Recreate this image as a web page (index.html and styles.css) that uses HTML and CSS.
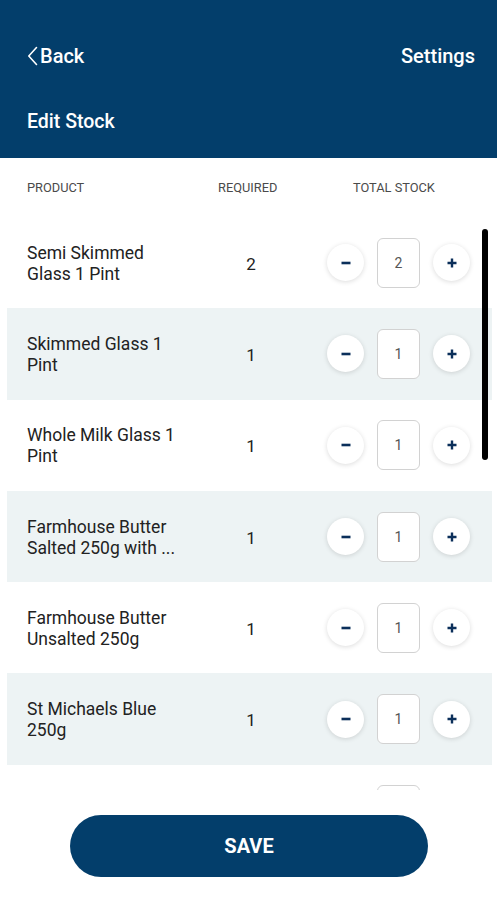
FILE: index.html
```html
<!DOCTYPE html>
<html lang="en">
<head>
    <meta charset="UTF-8">
    <meta name="viewport" content="width=device-width, initial-scale=1.0">
    <title>Edit Stock</title>
    <link rel="stylesheet" href="styles.css">
</head>
<body>
    <div class="app">
        <header class="topbar">
            <div class="nav">
                <a class="back" href="#">
                    <svg width="11" height="20" viewBox="0 0 11 20"><path d="M9.5 1.5 1.8 10l7.7 8.5" fill="none" stroke="#fff" stroke-width="1.6" stroke-linecap="round" stroke-linejoin="round"/></svg>
                    Back
                </a>
                <a class="settings" href="#">Settings</a>
            </div>
            <h1>Edit Stock</h1>
        </header>

        <div class="col-heads">
            <span class="h-product">Product</span>
            <span class="h-required">Required</span>
            <span class="h-total">Total Stock</span>
        </div>

        <div class="list">
            <div class="row">
                <div class="name">Semi Skimmed Glass 1 Pint</div>
                <div class="req">2</div>
                <div class="stepper">
                    <button class="round" type="button"><svg width="12" height="12" viewBox="0 0 12 12"><path d="M1.5 6h9" stroke="#0b2f5a" stroke-width="2.6"/></svg></button>
                    <div class="qty">2</div>
                    <button class="round" type="button"><svg width="12" height="12" viewBox="0 0 12 12"><path d="M1.5 6h9M6 1.5v9" stroke="#0b2f5a" stroke-width="2.4"/></svg></button>
                </div>
            </div>
            <div class="row alt">
                <div class="name">Skimmed Glass 1 Pint</div>
                <div class="req">1</div>
                <div class="stepper">
                    <button class="round" type="button"><svg width="12" height="12" viewBox="0 0 12 12"><path d="M1.5 6h9" stroke="#0b2f5a" stroke-width="2.6"/></svg></button>
                    <div class="qty">1</div>
                    <button class="round" type="button"><svg width="12" height="12" viewBox="0 0 12 12"><path d="M1.5 6h9M6 1.5v9" stroke="#0b2f5a" stroke-width="2.4"/></svg></button>
                </div>
            </div>
            <div class="row">
                <div class="name">Whole Milk Glass 1 Pint</div>
                <div class="req">1</div>
                <div class="stepper">
                    <button class="round" type="button"><svg width="12" height="12" viewBox="0 0 12 12"><path d="M1.5 6h9" stroke="#0b2f5a" stroke-width="2.6"/></svg></button>
                    <div class="qty">1</div>
                    <button class="round" type="button"><svg width="12" height="12" viewBox="0 0 12 12"><path d="M1.5 6h9M6 1.5v9" stroke="#0b2f5a" stroke-width="2.4"/></svg></button>
                </div>
            </div>
            <div class="row alt">
                <div class="name">Farmhouse Butter Salted 250g with ...</div>
                <div class="req">1</div>
                <div class="stepper">
                    <button class="round" type="button"><svg width="12" height="12" viewBox="0 0 12 12"><path d="M1.5 6h9" stroke="#0b2f5a" stroke-width="2.6"/></svg></button>
                    <div class="qty">1</div>
                    <button class="round" type="button"><svg width="12" height="12" viewBox="0 0 12 12"><path d="M1.5 6h9M6 1.5v9" stroke="#0b2f5a" stroke-width="2.4"/></svg></button>
                </div>
            </div>
            <div class="row">
                <div class="name">Farmhouse Butter Unsalted 250g</div>
                <div class="req">1</div>
                <div class="stepper">
                    <button class="round" type="button"><svg width="12" height="12" viewBox="0 0 12 12"><path d="M1.5 6h9" stroke="#0b2f5a" stroke-width="2.6"/></svg></button>
                    <div class="qty">1</div>
                    <button class="round" type="button"><svg width="12" height="12" viewBox="0 0 12 12"><path d="M1.5 6h9M6 1.5v9" stroke="#0b2f5a" stroke-width="2.4"/></svg></button>
                </div>
            </div>
            <div class="row alt">
                <div class="name">St Michaels Blue 250g</div>
                <div class="req">1</div>
                <div class="stepper">
                    <button class="round" type="button"><svg width="12" height="12" viewBox="0 0 12 12"><path d="M1.5 6h9" stroke="#0b2f5a" stroke-width="2.6"/></svg></button>
                    <div class="qty">1</div>
                    <button class="round" type="button"><svg width="12" height="12" viewBox="0 0 12 12"><path d="M1.5 6h9M6 1.5v9" stroke="#0b2f5a" stroke-width="2.4"/></svg></button>
                </div>
            </div>
            <div class="row">
                <div class="name"></div>
                <div class="req"></div>
                <div class="stepper">
                    <span class="round ghost"></span>
                    <div class="qty"></div>
                    <span class="round ghost"></span>
                </div>
            </div>
            <div class="scrollbar"></div>
        </div>

        <div class="footer">
            <button class="save" type="button">SAVE</button>
        </div>
    </div>
</body>
</html>
```

FILE: styles.css
```css
body {
    margin: 0;
    padding: 0;
    background-color: #fff;
    font-family: Roboto, "Liberation Sans", Arial, sans-serif;
    color: #222;
}
.app {
    width: 497px;
    height: 900px;
    overflow: hidden;
}
.topbar {
    background-color: #033e6b;
    color: #fff;
    height: 158px;
    padding: 0 22px 0 27px;
    box-sizing: border-box;
}
.nav {
    display: flex;
    justify-content: space-between;
    align-items: center;
    padding-top: 42px;
    height: 28px;
}
.nav a {
    color: #fff;
    text-decoration: none;
    font-size: 20px;
    font-weight: 500;
}
.back {
    display: flex;
    align-items: center;
    gap: 2px;
}
.topbar h1 {
    margin: 40px 0 0;
    font-size: 19.5px;
    font-weight: 500;
    line-height: 24px;
}
.col-heads {
    display: flex;
    align-items: center;
    height: 59px;
    padding-left: 27px;
    font-size: 12.8px;
    text-transform: uppercase;
    color: #4a4a4a;
}
.h-product {
    width: 191px;
}
.h-required {
    width: 135px;
}
.list {
    position: relative;
    height: 573px;
    overflow: hidden;
    padding: 0 5px 0 7px;
}
.row {
    display: flex;
    align-items: center;
    height: 91.3px;
    padding: 2px 0 0 20px;
    box-sizing: border-box;
}
.row.alt {
    background-color: #edf3f4;
}
.name {
    width: 152px;
    margin-right: 33px;
    font-size: 17.5px;
    line-height: 21px;
    color: #222;
}
.req {
    width: 78px;
    text-align: center;
    font-size: 17px;
    color: #222;
}
.stepper {
    display: flex;
    align-items: center;
    gap: 13px;
    margin: -2px 0 0 37px;
}
.round {
    width: 37px;
    height: 37px;
    border-radius: 50%;
    border: none;
    padding: 0;
    background-color: #fff;
    box-shadow: 0 1px 5px rgba(0, 0, 0, 0.14);
    display: flex;
    align-items: center;
    justify-content: center;
}
.round.ghost {
    box-shadow: none;
}
.qty {
    width: 43px;
    height: 50px;
    box-sizing: border-box;
    border: 1px solid #d2d2d2;
    border-radius: 6px;
    background-color: #fff;
    display: flex;
    align-items: center;
    justify-content: center;
    font-size: 14px;
    color: #555;
}
.scrollbar {
    position: absolute;
    top: 12px;
    left: 482px;
    width: 6px;
    height: 231px;
    border-radius: 3px;
    background-color: #000;
}
.footer {
    padding-top: 25px;
    display: flex;
    justify-content: center;
}
.save {
    width: 358px;
    height: 62px;
    margin-left: 1px;
    border: none;
    border-radius: 31px;
    background-color: #033e6b;
    color: #fff;
    font-family: Roboto, "Liberation Sans", Arial, sans-serif;
    font-size: 20px;
    font-weight: 700;
}
```
